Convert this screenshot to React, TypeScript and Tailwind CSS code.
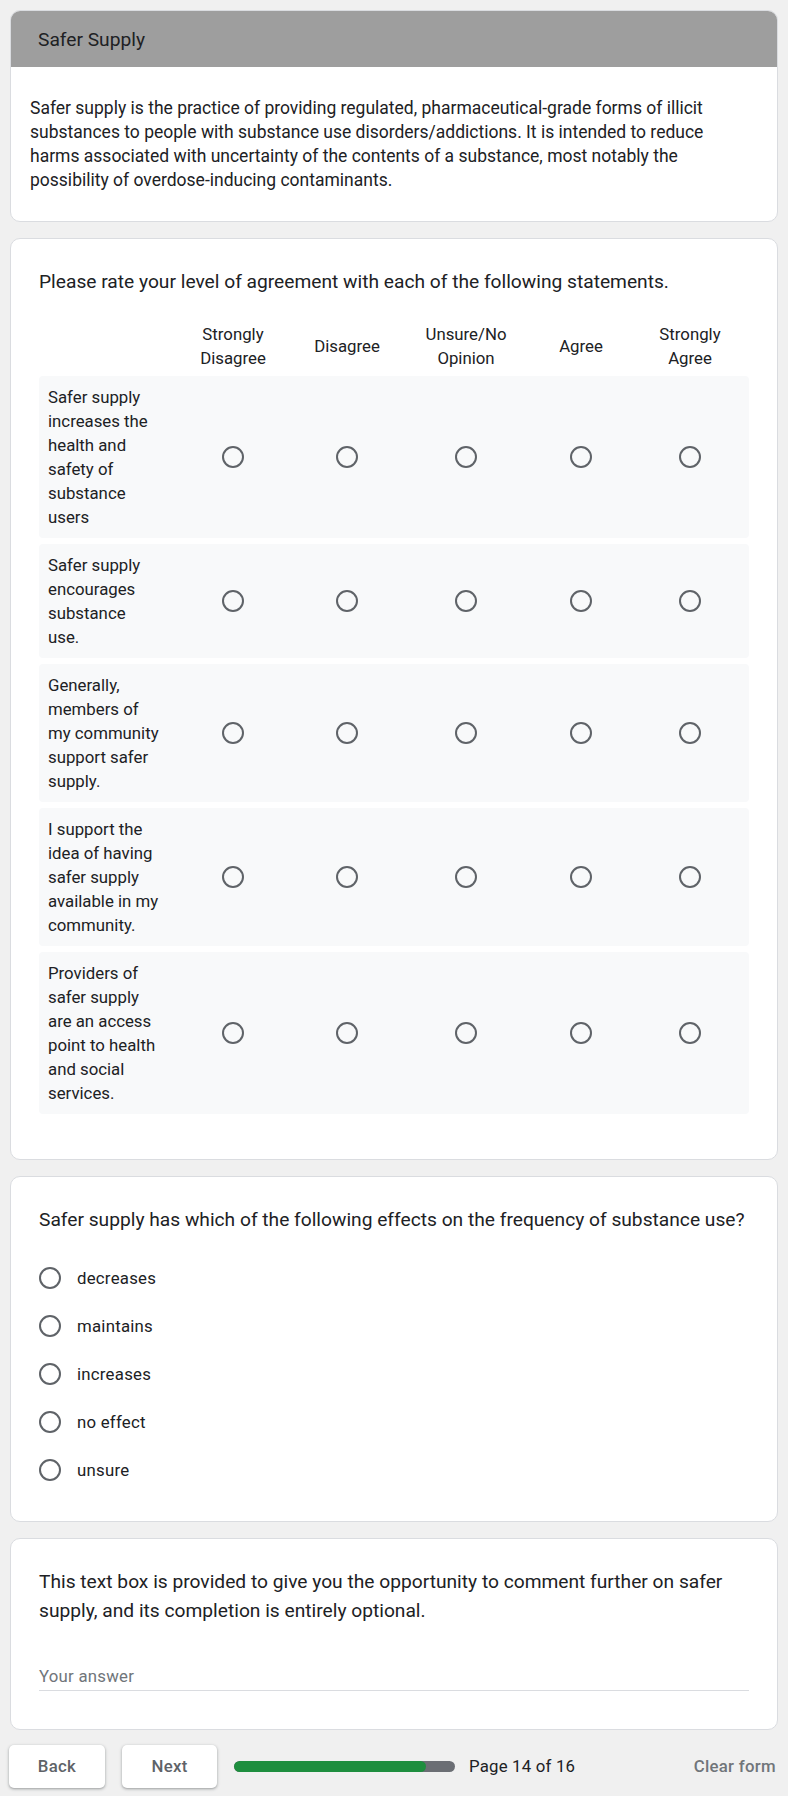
const rows = [
  "Safer supply increases the health and safety of substance users",
  "Safer supply encourages substance use.",
  "Generally, members of my community support safer supply.",
  "I support the idea of having safer supply available in my community.",
  "Providers of safer supply are an access point to health and social services.",
];

const columns = ["Strongly Disagree", "Disagree", "Unsure/No Opinion", "Agree", "Strongly Agree"];

const options = ["decreases", "maintains", "increases", "no effect", "unsure"];

const gridCols = "grid grid-cols-[134px_120px_108px_130px_100px_1fr]";

const Radio = () => <div className="w-[22px] h-[22px] rounded-full border-2 border-[#5f6368] shrink-0" />;

const Card: React.FC<{children: React.ReactNode; className?: string}> = ({children, className}) => (
  <div className={`bg-white border border-[#dadce0] rounded-[10px] ${className ?? ""}`}>{children}</div>
);

const App = () => {
  return (
    <div
      className="min-h-[1796px] bg-[#f0f0f0] px-[10px] pt-[10px] pb-[10px] text-[#202124]"
      style={{fontFamily: "Roboto, 'Liberation Sans', sans-serif"}}
    >
      <div className="flex flex-col gap-4">
        {/* section header */}
        <Card className="overflow-hidden">
          <div className="h-[56px] bg-[#9e9e9e] flex items-center px-[27px]">
            <h2 className="text-[19.2px] leading-[29px]">Safer Supply</h2>
          </div>
          <p className="pl-[19px] pr-[40px] pt-[29px] pb-[29px] text-[17.5px] leading-[24px]">
            Safer supply is the practice of providing regulated, pharmaceutical-grade forms of illicit substances to
            people with substance use disorders/addictions. It is intended to reduce harms associated with uncertainty
            of the contents of a substance, most notably the possibility of overdose-inducing contaminants.
          </p>
        </Card>

        {/* grid question */}
        <Card className="px-[28px] pt-[28px] pb-[45px]">
          <h3 className="text-[19.2px] leading-[29px]">
            Please rate your level of agreement with each of the following statements.
          </h3>
          <div className={`${gridCols} mt-[26px] h-[48px] items-center`}>
            <div />
            {columns.map((c) => (
              <div key={c} className="text-center text-[16.8px] leading-[24px] px-1">
                {c.split(" ").map((w, i) => (
                  <div key={i}>{w}</div>
                ))}
              </div>
            ))}
          </div>
          <div className="flex flex-col gap-[6px] mt-[6px]">
            {rows.map((r) => (
              <div key={r} className={`${gridCols} items-center bg-[#f8f9fa] rounded-[4px] py-[9px]`}>
                <div className="pl-[9px]">
                  <div className="w-[112px] text-[16.8px] leading-[24px]">{r}</div>
                </div>
                {columns.map((c) => (
                  <div key={c} className="flex justify-center">
                    <Radio />
                  </div>
                ))}
              </div>
            ))}
          </div>
        </Card>

        {/* multiple choice */}
        <Card className="px-[28px] pt-[28px] pb-[27px]">
          <h3 className="text-[19.2px] leading-[29px] whitespace-nowrap">
            Safer supply has which of the following effects on the frequency of substance use?
          </h3>
          <div className="mt-[20px] flex flex-col">
            {options.map((o) => (
              <div key={o} className="h-[48px] flex items-center gap-[16px]">
                <Radio />
                <span className="text-[16.8px] leading-[24px] tracking-[0.24px]">{o}</span>
              </div>
            ))}
          </div>
        </Card>

        {/* free text */}
        <Card className="px-[28px] pt-[28px] pb-[38px]">
          <h3 className="text-[19.2px] leading-[29px]">
            This text box is provided to give you the opportunity to comment further on safer supply, and its
            completion is entirely optional.
          </h3>
          <div className="mt-[39px] border-b border-[#dadce0] pb-px">
            <span className="text-[16.8px] leading-[24px] tracking-[0.24px] text-[#70757a]">Your answer</span>
          </div>
        </Card>
      </div>

      {/* footer nav */}
      <div className="mt-[15px] flex items-center h-[43px] -ml-px">
        <button className="h-[43px] w-[96px] bg-white rounded-[5px] shadow-[0_1px_2px_rgba(60,64,67,0.3),0_1px_3px_1px_rgba(60,64,67,0.15)] text-[16.8px] font-medium tracking-[0.3px] text-[#5f6368]">
          Back
        </button>
        <button className="ml-[17px] h-[43px] w-[95px] bg-white rounded-[5px] shadow-[0_1px_2px_rgba(60,64,67,0.3),0_1px_3px_1px_rgba(60,64,67,0.15)] text-[16.8px] font-medium tracking-[0.3px] text-[#5f6368]">
          Next
        </button>
        <div className="ml-[17px] w-[221px] h-[11px] rounded-full bg-[#6b6e74] overflow-hidden">
          <div className="h-full w-[192px] rounded-full bg-[#1e8e3e]" />
        </div>
        <span className="ml-[14px] text-[16.8px] tracking-[0.2px] text-[#202124]">Page 14 of 16</span>
        <span className="ml-auto mr-[2px] text-[16.8px] font-medium tracking-[0.3px] text-[#70757a]">Clear form</span>
      </div>
    </div>
  );
};

export default App;
